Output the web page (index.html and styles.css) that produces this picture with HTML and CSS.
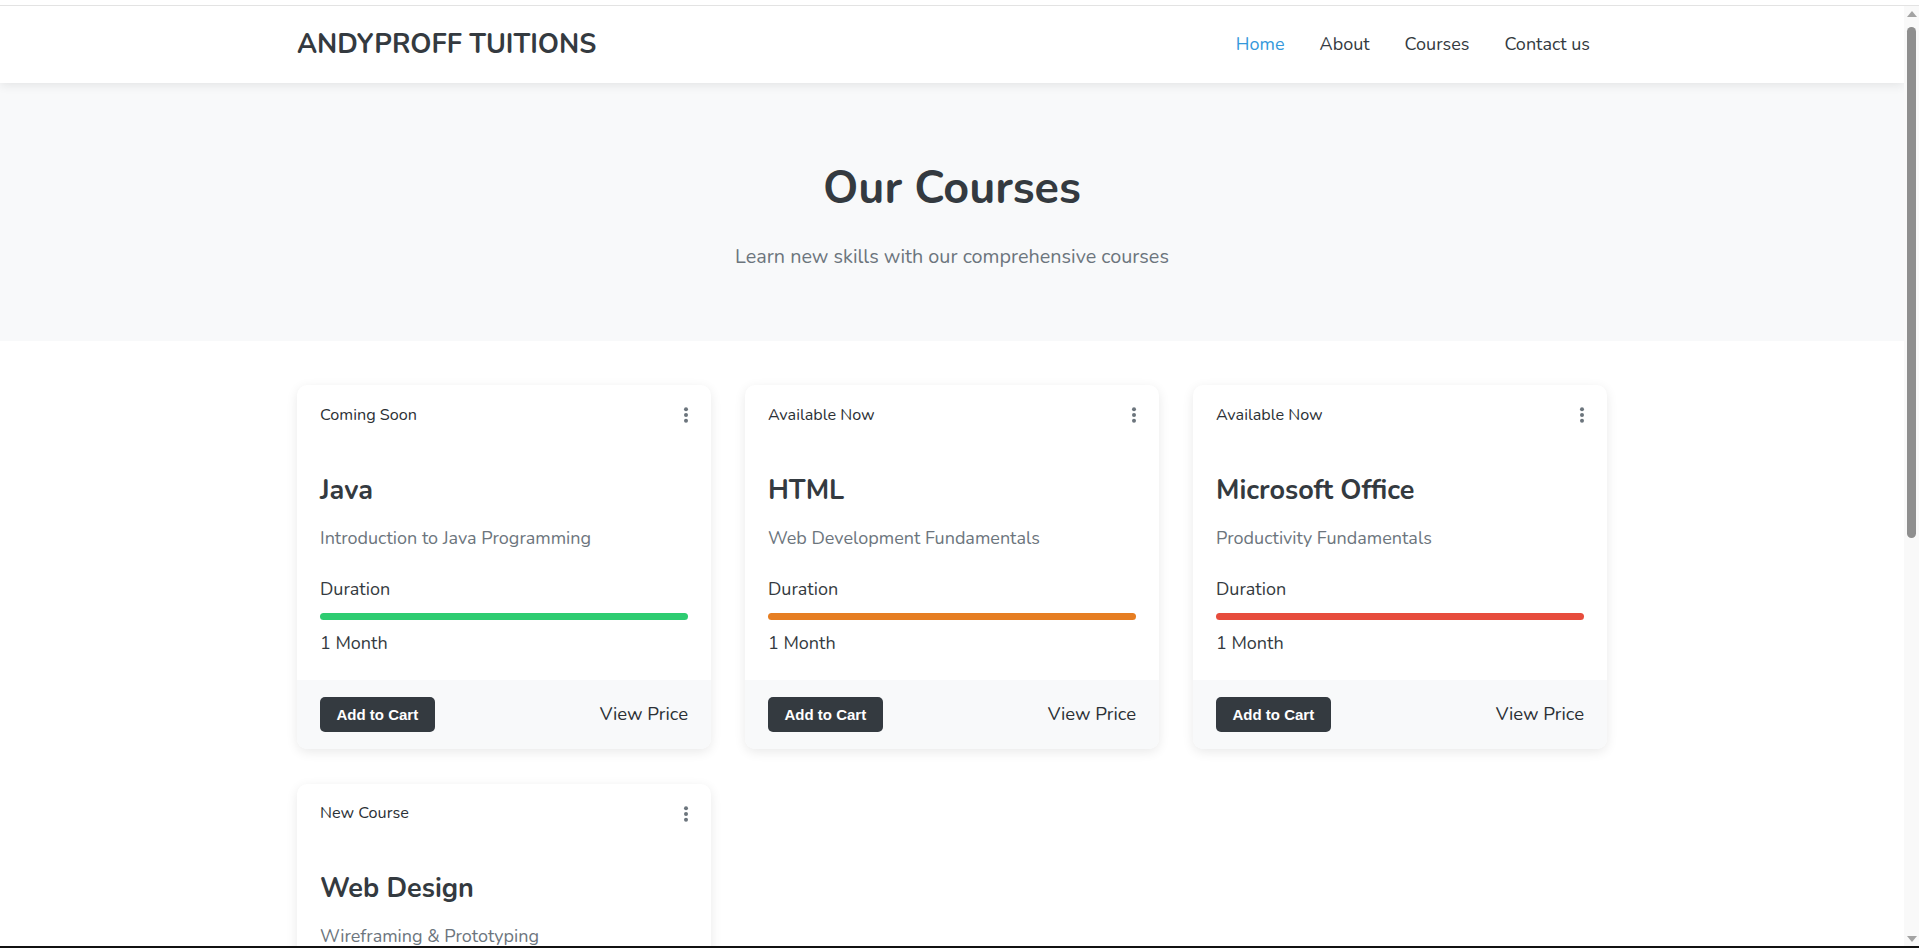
FILE: index.html
```html
<!DOCTYPE html>
<html lang="en">
<head>
<meta charset="utf-8">
<title>Courses - Andyproff Tuitions</title>
<link rel="stylesheet" href="styles.css">
</head>
<body>
<header class="site-header">
  <div class="container header-inner">
    <a class="logo" href="#">ANDYPROFF TUITIONS</a>
    <nav class="nav">
      <a class="nav-link active" href="#">Home</a>
      <a class="nav-link" href="#">About</a>
      <a class="nav-link" href="#">Courses</a>
      <a class="nav-link" href="#">Contact us</a>
    </nav>
  </div>
</header>

<section class="hero">
  <h1 class="hero-title">Our Courses</h1>
  <p class="hero-sub">Learn new skills with our comprehensive courses</p>
</section>

<main class="courses">
  <div class="container grid">
    <article class="card">
      <div class="card-body">
        <div class="card-top">
          <span class="status">Coming Soon</span>
          <svg class="dots" width="6" height="16" viewBox="0 0 6 16"><circle cx="3" cy="2.3" r="2"/><circle cx="3" cy="8" r="2"/><circle cx="3" cy="13.7" r="2"/></svg>
        </div>
        <h2 class="course-title">Java</h2>
        <p class="course-desc">Introduction to Java Programming</p>
        <p class="label">Duration</p>
        <div class="bar bar-green"></div>
        <p class="value">1 Month</p>
      </div>
      <div class="card-footer">
        <button class="btn">Add to Cart</button>
        <span class="price">View Price</span>
      </div>
    </article>

    <article class="card">
      <div class="card-body">
        <div class="card-top">
          <span class="status">Available Now</span>
          <svg class="dots" width="6" height="16" viewBox="0 0 6 16"><circle cx="3" cy="2.3" r="2"/><circle cx="3" cy="8" r="2"/><circle cx="3" cy="13.7" r="2"/></svg>
        </div>
        <h2 class="course-title">HTML</h2>
        <p class="course-desc">Web Development Fundamentals</p>
        <p class="label">Duration</p>
        <div class="bar bar-orange"></div>
        <p class="value">1 Month</p>
      </div>
      <div class="card-footer">
        <button class="btn">Add to Cart</button>
        <span class="price">View Price</span>
      </div>
    </article>

    <article class="card">
      <div class="card-body">
        <div class="card-top">
          <span class="status">Available Now</span>
          <svg class="dots" width="6" height="16" viewBox="0 0 6 16"><circle cx="3" cy="2.3" r="2"/><circle cx="3" cy="8" r="2"/><circle cx="3" cy="13.7" r="2"/></svg>
        </div>
        <h2 class="course-title">Microsoft Office</h2>
        <p class="course-desc">Productivity Fundamentals</p>
        <p class="label">Duration</p>
        <div class="bar bar-red"></div>
        <p class="value">1 Month</p>
      </div>
      <div class="card-footer">
        <button class="btn">Add to Cart</button>
        <span class="price">View Price</span>
      </div>
    </article>

    <article class="card">
      <div class="card-body">
        <div class="card-top">
          <span class="status">New Course</span>
          <svg class="dots" width="6" height="16" viewBox="0 0 6 16"><circle cx="3" cy="2.3" r="2"/><circle cx="3" cy="8" r="2"/><circle cx="3" cy="13.7" r="2"/></svg>
        </div>
        <h2 class="course-title">Web Design</h2>
        <p class="course-desc">Wireframing &amp; Prototyping</p>
        <p class="label">Duration</p>
        <div class="bar bar-blue"></div>
        <p class="value">1 Month</p>
      </div>
      <div class="card-footer">
        <button class="btn">Add to Cart</button>
        <span class="price">View Price</span>
      </div>
    </article>
  </div>
</main>

<div class="scrollbar" aria-hidden="true">
  <span class="sb-arrow sb-up"></span>
  <span class="sb-thumb"></span>
  <span class="sb-track"></span>
  <span class="sb-arrow sb-down"></span>
</div>
<div class="frame-bottom" aria-hidden="true"></div>
</body>
</html>
```

FILE: styles.css
```css
* {
  box-sizing: border-box;
}

html {
  margin: 0;
  padding: 5px 0 0;
  background: #ffffff;
}

body {
  margin: 0;
  padding: 0 15px 0 0;
  border-top: 1px solid #e3e3e3;
  background: #ffffff;
  font-family: "Nunito", "Lato", sans-serif;
  font-size: 18px;
  line-height: 1.2;
  color: #343a40;
}

.container {
  width: 1310px;
  margin: 0 auto;
}

/* Header */
.site-header {
  position: relative;
  z-index: 2;
  background: #ffffff;
  box-shadow: 0 2px 10px rgba(0, 0, 0, 0.09);
}

.header-inner {
  height: 77px;
  padding-top: 1px;
  display: flex;
  align-items: center;
  justify-content: space-between;
}

.logo {
  font-size: 27px;
  font-weight: 700;
  color: #343a40;
  text-decoration: none;
}

.nav {
  display: flex;
  align-items: center;
}

.nav-link {
  padding: 0 17.5px;
  font-size: 18px;
  color: #343a40;
  text-decoration: none;
}

.nav-link:last-child {
  padding-right: 17px;
}

.nav-link.active {
  color: #3498db;
}

/* Hero */
.hero {
  background: #f8f9fa;
  padding: 79px 0 73px;
  text-align: center;
}

.hero-title {
  margin: 0;
  font-size: 45px;
  font-weight: 700;
  line-height: 1.2;
  color: #343a40;
}

.hero-sub {
  margin: 28.5px 0 0;
  font-size: 19.8px;
  line-height: 1.2;
  color: #6c757d;
}

/* Courses */
.courses {
  padding: 44px 0 48px;
}

.grid {
  display: grid;
  grid-template-columns: repeat(3, 1fr);
  column-gap: 34px;
  row-gap: 35px;
}

.card {
  background: #ffffff;
  border-radius: 10px;
  overflow: hidden;
  box-shadow: 0 3px 12px rgba(0, 0, 0, 0.09);
}

.card-body {
  padding: 18px 23px 25px;
}

.card-top {
  height: 24px;
  display: flex;
  align-items: center;
  justify-content: space-between;
}

.status {
  font-size: 16.2px;
  color: #2b3035;
}

.dots {
  fill: #6c757d;
  margin-right: -1px;
}

.course-title {
  margin: 47.5px 0 0;
  font-size: 27px;
  font-weight: 700;
  line-height: 1.2;
  color: #343a40;
}

.course-desc {
  margin: 20.5px 0 0;
  font-size: 18px;
  color: #6c757d;
}

.label {
  margin: 30px 0 0;
  font-size: 18px;
  color: #343a40;
}

.bar {
  height: 7px;
  border-radius: 4px;
  margin-top: 12px;
}

.bar-green { background: #2ecc71; }
.bar-orange { background: #e67e22; }
.bar-red { background: #e74c3c; }
.bar-blue { background: #3498db; }

.value {
  margin: 13.5px 0 0;
  font-size: 18px;
  color: #343a40;
}

.card-footer {
  background: #f8f9fa;
  height: 69px;
  padding: 0 23px;
  display: flex;
  align-items: center;
  justify-content: space-between;
}

.btn {
  height: 35px;
  padding: 0 16.5px;
  border: none;
  border-radius: 5px;
  background: #343a40;
  color: #ffffff;
  font-family: "Liberation Sans", Arial, sans-serif;
  font-size: 15px;
  font-weight: 700;
  cursor: pointer;
}

.price {
  font-size: 18.5px;
  color: #2b3035;
  margin-top: -1px;
}

/* Simulated browser scrollbar */
.scrollbar {
  position: fixed;
  top: 6px;
  right: 0;
  bottom: 2px;
  width: 15px;
  background: #f9f9f9;
  display: flex;
  flex-direction: column;
  align-items: center;
  z-index: 10;
}

.sb-arrow {
  width: 0;
  height: 0;
  border-left: 5px solid transparent;
  border-right: 5px solid transparent;
}

.sb-up {
  margin-top: 5px;
  border-bottom: 6px solid #a3a3a3;
}

.sb-down {
  margin-bottom: 4px;
  border-top: 6px solid #a3a3a3;
}

.sb-thumb {
  margin-top: 10px;
  width: 9px;
  height: 511px;
  border-radius: 5px;
  background: #8f8f8f;
}

.sb-track {
  flex: 1;
}

.frame-bottom {
  position: fixed;
  left: 0;
  right: 0;
  bottom: 0;
  height: 2px;
  background: #111111;
  z-index: 11;
}
```
